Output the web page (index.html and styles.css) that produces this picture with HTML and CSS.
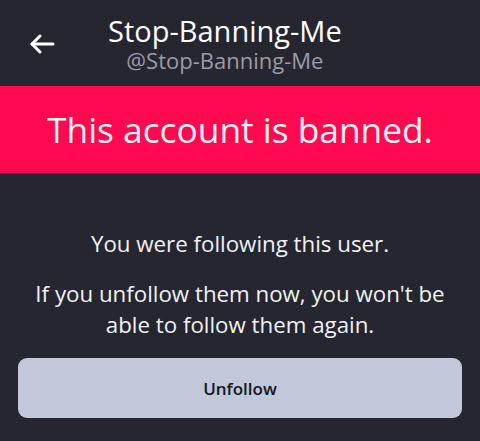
FILE: index.html
```html
<!DOCTYPE html>
<html lang="en">
<head>
<meta charset="utf-8">
<title>Stop-Banning-Me</title>
<link rel="stylesheet" href="styles.css">
</head>
<body>
<div class="screen">
  <header class="topbar">
    <button class="back" aria-label="Back">
      <svg width="26" height="22" viewBox="0 0 26 22" fill="none" stroke="#ffffff" stroke-width="3" stroke-linecap="round" stroke-linejoin="round">
        <path d="M24 11H3"/>
        <path d="M11 3L3 11L11 19"/>
      </svg>
    </button>
    <div class="names">
      <div class="name">Stop-Banning-Me</div>
      <div class="handle">@Stop-Banning-Me</div>
    </div>
  </header>
  <div class="banner">This account is banned.</div>
  <main class="content">
    <p class="msg">You were following this user.</p>
    <p class="msg">If you unfollow them now, you won't be able to follow them again.</p>
    <button class="unfollow">Unfollow</button>
  </main>
</div>
</body>
</html>
```
FILE: styles.css
```css
html, body {
  margin: 0;
  padding: 0;
  background: #252630;
}
body {
  font-family: "Open Sans", "Noto Sans", sans-serif;
  color: #f2f2f4;
  width: 480px;
  height: 441px;
  overflow: hidden;
}
.screen {
  display: flex;
  flex-direction: column;
}
.topbar {
  height: 86px;
  display: flex;
  align-items: center;
  padding: 2px 0 0 29px;
  box-sizing: border-box;
}
.back {
  background: none;
  border: 0;
  padding: 0;
  width: 26px;
  height: 22px;
  display: flex;
}
.names {
  margin-left: 53px;
  display: flex;
  flex-direction: column;
  align-items: center;
}
.name {
  font-size: 29px;
  line-height: 32px;
  color: #ffffff;
}
.handle {
  font-size: 22px;
  line-height: 26px;
  color: #9a9ca7;
}
.banner {
  height: 87px;
  background: #ff0a50;
  display: flex;
  align-items: center;
  justify-content: center;
  font-size: 35.3px;
  line-height: 1;
  color: #fdf0f4;
}
.content {
  padding: 55px 18px 0;
  display: flex;
  flex-direction: column;
  align-items: stretch;
}
.msg {
  margin: 0 0 19px;
  font-size: 22.3px;
  line-height: 31px;
  text-align: center;
  padding: 0 8px;
}
.unfollow {
  margin-top: -1px;
  height: 60px;
  border: 0;
  border-radius: 9px;
  background: #c0c8da;
  font-family: inherit;
  font-size: 17px;
  font-weight: 600;
  color: #16171d;
}
```
